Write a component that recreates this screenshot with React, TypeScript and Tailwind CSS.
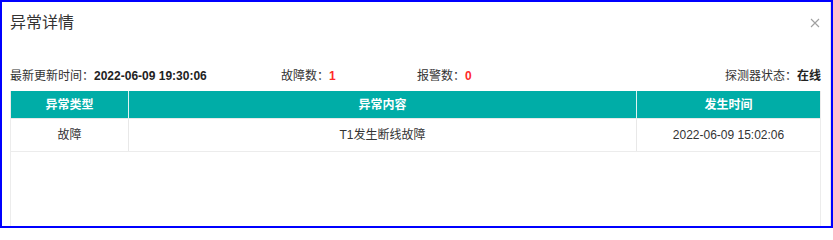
import React from "react";

export default function App() {
  const font = { fontFamily: '"Liberation Sans", "Noto Sans CJK SC", sans-serif' };
  return (
    <div
      className="w-[833px] h-[228px] overflow-hidden border-2 border-[#0000ff] bg-white text-[#333]"
      style={font}
    >
      <div className="flex h-full flex-col pl-[8px] pr-[9px] border-r border-[#e6e6e6]">
        <div className="flex h-[42px] items-center justify-between pt-[0px]">
          <div className="text-[16px] leading-none text-[#333]">异常详情</div>
          <svg width="10" height="10" viewBox="0 0 10 10" className="mr-[1px] mt-[0px]">
            <path d="M1 1L9 9M9 1L1 9" stroke="#a0a0a0" strokeWidth="1.1" />
          </svg>
        </div>
        <div className="mt-[22px] flex h-[20px] items-center text-[12px]">
          <div className="w-[271px]">
            最新更新时间：<span className="font-bold text-[#222]">2022-06-09 19:30:06</span>
          </div>
          <div className="w-[136px]">
            故障数：<span className="font-bold text-[#ff2a2a]">1</span>
          </div>
          <div className="flex-1">
            报警数：<span className="font-bold text-[#ff2a2a]">0</span>
          </div>
          <div>
            探测器状态：<span className="font-bold text-[#222]">在线</span>
          </div>
        </div>
        <div className="mt-[5px] flex-1 border-x border-[#ececec]">
          <div className="grid h-[27px] grid-cols-[118px_508px_1fr] bg-[#00ada7] text-[12px] font-bold text-white">
            <div className="flex items-center justify-center border-r border-[#dff3f2]">异常类型</div>
            <div className="flex items-center justify-center border-r border-[#dff3f2]">异常内容</div>
            <div className="flex items-center justify-center">发生时间</div>
          </div>
          <div className="grid h-[34px] grid-cols-[118px_508px_1fr] border-t border-[#e8e8e8] border-b border-b-[#ececec] text-[12px] text-[#333]">
            <div className="flex items-center justify-center border-r border-[#e8e8e8]">故障</div>
            <div className="flex items-center justify-center border-r border-[#e8e8e8]">T1发生断线故障</div>
            <div className="flex items-center justify-center">2022-06-09 15:02:06</div>
          </div>
        </div>
      </div>
    </div>
  );
}
